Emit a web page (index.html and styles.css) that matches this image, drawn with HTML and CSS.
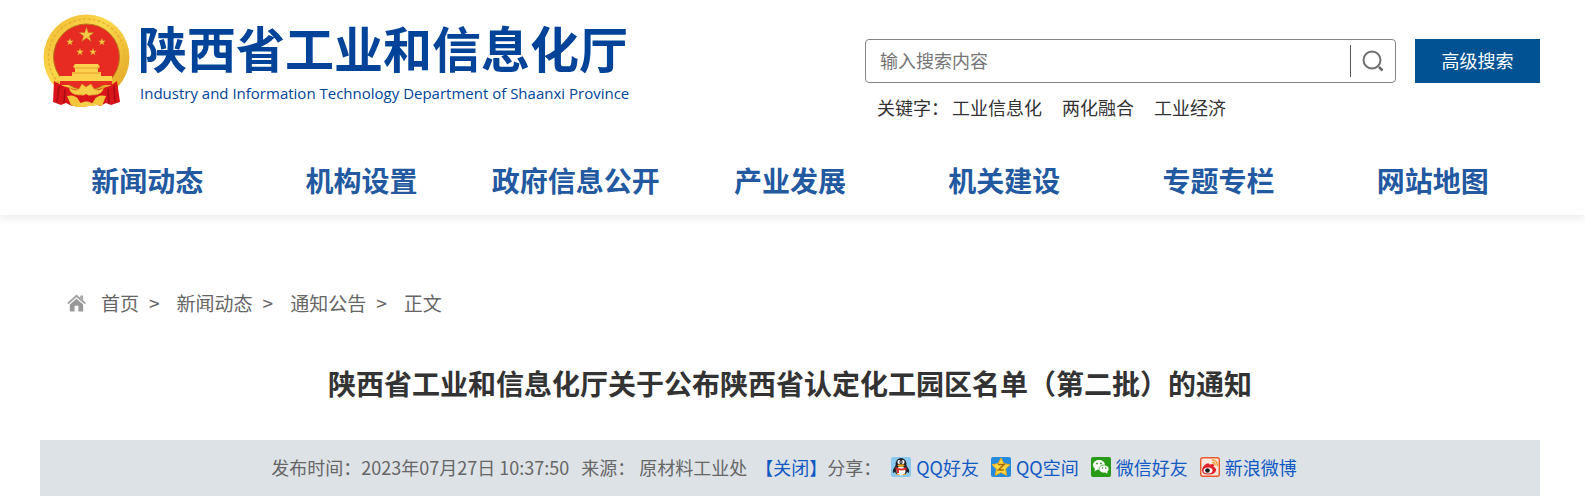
FILE: index.html
```html
<!DOCTYPE html>
<html lang="zh-CN">
<head>
  <meta charset="UTF-8">
  <meta name="viewport" content="width=device-width, initial-scale=1.0">
  <title>陕西省工业和信息化厅</title>
  <link rel="stylesheet" href="styles.css">
</head>
<body>
  <header class="header">
    <div class="wrap top">
      <a class="logo" href="#">
        <svg class="emblem" viewBox="0 0 87 93" aria-hidden="true">
          <defs>
            <linearGradient id="gold" x1="0" y1="0" x2="1" y2="1">
              <stop offset="0" stop-color="#efb52e"/>
              <stop offset=".4" stop-color="#fbd84c"/>
              <stop offset="1" stop-color="#dfa020"/>
            </linearGradient>
            <path id="star" d="M0-10 2.3-3.1H9.5L3.7 1.2 5.9 8.1 0 3.8-5.9 8.1-3.7 1.2-9.5-3.1H-2.3Z"/>
          </defs>
          <circle cx="43.500" cy="43.500" r="43" fill="url(#gold)"/>
          <circle cx="43.500" cy="43" r="38" fill="none" stroke="#e9b233" stroke-width="1.500" stroke-dasharray="3 2"/>
          <circle cx="43.500" cy="43" r="33" fill="#e72a22" stroke="#b9771a" stroke-width="1"/>
          <g fill="#f3c844" stroke="#b5611c" stroke-width=".5">
            <use href="#star" transform="translate(43.500 21) scale(.8)"/>
            <use href="#star" transform="translate(27 28) scale(.4)"/>
            <use href="#star" transform="translate(59 28) scale(.4)"/>
            <use href="#star" transform="translate(37 38) scale(.4)"/>
            <use href="#star" transform="translate(50 38) scale(.4)"/>
          </g>
          <path d="M32 50h23l2 3-2 1v4h3v4h11v5H17v-5h12v-4h3v-4l-2-1Z" fill="#fad24d"/>
          <path d="M31 54h25M29 59h29" stroke="#e2a02c" stroke-width="1"/>
          <path d="M17 67h52v4H17Z" fill="#e72a22"/>
          <path d="M11 67 20 72 34 76 43 72 53 76 67 72 74 67 77 88 68 91 63 89 57 92 43 86 29 92 23 89 18 91 10 88Z" fill="#d9151b"/>
          <path d="M16 72 14 88M22 75 21 89M65 75 66 90M71 72 72 88" stroke="#a80d14" stroke-width="1.500"/>
          <path d="M26 73q5 5 10 2l3-5 4 3 5-3 3 5q6 3 10-2-2 8-10 8-4-1-7 3-4-4-8-3-9 0-10-8Z" fill="#f7cc46" stroke="#d69121" stroke-width=".6"/>
          <path d="M24 82q8-2 12 4l7-3 8 3q4-6 12-4l-4 10-10-2-6 3H33l-5-2Z" fill="#f4c43b"/>
          <path d="M35 85 43 80 52 85 48 91H39Z" fill="#d9151b"/>
          <path d="M34 92q9-9 19 0Z" fill="#f8cf48"/>
        </svg>
        <span class="logo-text">
          <span class="logo-cn">陕西省工业和信息化厅</span>
          <span class="logo-en">Industry and Information Technology Department of Shaanxi Province</span>
        </span>
      </a>

      <div class="search">
        <form class="search-form">
          <div class="search-box">
            <input class="search-input" type="text" placeholder="输入搜索内容" aria-label="输入搜索内容">
            <button class="search-btn" type="button" aria-label="搜索">
              <svg viewBox="0 0 22 22" width="22" height="22">
                <circle cx="10" cy="10" r="8.500" fill="none" stroke="#707070" stroke-width="2"/>
                <path d="m17 17 3.500 3.500" stroke="#666" stroke-width="2.500"/>
              </svg>
            </button>
          </div>
          <button class="advanced" type="button">高级搜索</button>
        </form>
        <div class="keywords">
          <span>关键字：</span>
          <a href="#">工业信息化</a>
          <a href="#">两化融合</a>
          <a href="#">工业经济</a>
        </div>
      </div>
    </div>

    <nav class="wrap nav">
      <a href="#">新闻动态</a>
      <a href="#">机构设置</a>
      <a href="#">政府信息公开</a>
      <a href="#">产业发展</a>
      <a href="#">机关建设</a>
      <a href="#">专题专栏</a>
      <a href="#">网站地图</a>
    </nav>
  </header>

  <main class="wrap">
    <div class="crumbs">
      <svg class="home" viewBox="0 0 20 18" aria-hidden="true">
        <path d="M10 0 14 3.500V1h3v5.200L20 9l-1.500 1.300L10 3 1.500 10.300 0 9Z" fill="#a6a6a6"/>
        <path d="M10 4.500 17 10.500V18h-5v-6H8v6H3v-7.500Z" fill="#999"/>
      </svg>
      <a href="#">首页</a>
      <span class="sep">&gt;</span>
      <a href="#">新闻动态</a>
      <span class="sep">&gt;</span>
      <a href="#">通知公告</a>
      <span class="sep">&gt;</span>
      <span>正文</span>
    </div>

    <h1 class="title">陕西省工业和信息化厅关于公布陕西省认定化工园区名单（第二批）的通知</h1>

    <div class="info">
      <span class="time">发布时间：2023年07月27日 10:37:50</span>
      <span class="from">来源：</span>
      <span class="source">原材料工业处</span>
      <a class="close" href="#">【关闭】</a>
      <span class="share-label">分享：</span>
      <a class="share" href="#">
        <svg viewBox="0 0 20 20" aria-hidden="true">
          <rect width="20" height="20" rx="2" fill="#8cc9ee"/>
          <path d="M5 8q-4 5-3 8l2-1q1 3 6 3t6-3l2 1q1-3-3-8Z" fill="#20242a"/>
          <ellipse cx="10" cy="7" rx="5.500" ry="6" fill="#20242a"/>
          <ellipse cx="10" cy="14" rx="4.500" ry="4.500" fill="#fff"/>
          <ellipse cx="8" cy="5" rx="1.500" ry="2" fill="#fff"/>
          <ellipse cx="12" cy="5" rx="1.500" ry="2" fill="#fff"/>
          <path d="M8.500 4.500v1M11.500 4.500v1" stroke="#111"/>
          <ellipse cx="10" cy="8.500" rx="3.500" ry="1.200" fill="#f3a51d"/>
          <path d="M4.500 10q5.500 3 11 0v2.500Q10 14 8 13v3H6v-3.500l-1.500-.5Z" fill="#df2b28"/>
          <path d="M4 18q3-2 5.500 0ZM10.500 18q3-2 5.500 0Z" fill="#f3a51d"/>
        </svg>QQ好友</a>
      <a class="share" href="#">
        <svg viewBox="0 0 20 20" aria-hidden="true">
          <rect width="20" height="20" rx="2" fill="#278bdd"/>
          <path d="m10 1 2.800 5.700 6.200.9-4.500 4.400 1.100 6.300L10 15.400l-5.600 2.900L5.500 12 1 7.600l6.200-.9Z" fill="#ffdc43" stroke="#f2aa1d"/>
          <path d="M7 7.500h6l-5.500 5.500H13" fill="none" stroke="#a66b08" stroke-width="1.500"/>
        </svg>QQ空间</a>
      <a class="share" href="#">
        <svg viewBox="0 0 20 20" aria-hidden="true">
          <rect width="20" height="20" rx="2" fill="#289b16"/>
          <ellipse cx="8" cy="8" rx="6" ry="5" fill="#fff"/>
          <path d="m4 11-.5 3.500L7 12Z" fill="#fff"/>
          <ellipse cx="13" cy="12" rx="5" ry="4" fill="#fff" stroke="#289b16" stroke-width=".7"/>
          <path d="m14 15 2.500 2-.3-3Z" fill="#fff"/>
          <g fill="#289b16"><circle cx="6" cy="6.500" r=".9"/><circle cx="10" cy="6.500" r=".9"/><circle cx="11.500" cy="11" r=".8"/><circle cx="14.700" cy="11" r=".8"/></g>
        </svg>微信好友</a>
      <a class="share" href="#">
        <svg viewBox="0 0 20 20" aria-hidden="true">
          <rect x=".7" y=".7" width="18.600" height="18.600" rx="2" fill="#f8e6df" stroke="#e85a2a" stroke-width="1.400"/>
          <path d="M2 13q0-3 4-6 3-2 3.500.7 4-1.400 4.500.6 0 1-.5 1.700 3 1 2.500 3.500-1 4-7.500 4Q2 17.500 2 13Z" fill="#df2029"/>
          <ellipse cx="8" cy="13.500" rx="4.500" ry="3" fill="#fff"/>
          <circle cx="7.500" cy="13.500" r="2.300" fill="#181818"/>
          <path d="M12 3q5-.5 5.500 6M12.500 5.500q2.500 0 2.700 3" fill="none" stroke="#f29a2c" stroke-width="1.400"/>
        </svg>新浪微博</a>
    </div>
  </main>
</body>
</html>
```
FILE: styles.css
```css
body {
  margin: 0;
  background: #fff;
  color: #333;
  font-family: "Noto Sans CJK SC", sans-serif;
  font-size: 18px;
  font-weight: 400;
  line-height: 24px;
}

a {
  color: inherit;
  text-decoration: none;
}

.wrap {
  padding: 0 45px 0 40px;
}

.header {
  padding-bottom: 2px;
  box-shadow: 0 2px 10px rgba(0, 0, 0, 0.1);
}

.top {
  display: flex;
  justify-content: space-between;
  padding-bottom: 28px;
}

.logo {
  display: flex;
  align-items: flex-start;
  gap: 8px;
  padding: 14px 0 0 3px;
  color: #004398;
}

.emblem {
  width: 87px;
  height: 93px;
}

.logo-text {
  display: flex;
  flex-direction: column;
  gap: 9px;
  padding-top: 8px;
}

.logo-cn {
  font-size: 49px;
  font-weight: bold;
  line-height: 50px;
}

.logo-en {
  padding-left: 2px;
  font-family: "Open Sans", sans-serif;
  font-size: 15px;
}

.search {
  width: 675px;
  padding-top: 39px;
}

.search-form {
  display: flex;
  gap: 19px;
}

.search-box {
  display: flex;
  flex: 1;
  align-items: center;
  box-sizing: border-box;
  height: 44px;
  border: 1px solid #858585;
  border-radius: 4px;
}

.search-input {
  flex: 1;
  min-width: 0;
  padding: 0 14px 2px;
  border: none;
  outline: none;
  background: none;
  font: inherit;
}

.search-input::placeholder {
  color: #757575;
}

.search-btn {
  display: flex;
  align-items: center;
  height: 32px;
  padding: 0 11px;
  border: none;
  border-left: 1px solid #555;
  background: none;
  cursor: pointer;
}

.advanced {
  width: 125px;
  padding: 0 0 2px;
  border: none;
  background: #005293;
  color: #fff;
  font: inherit;
  cursor: pointer;
}

.keywords {
  display: flex;
  gap: 20px;
  padding: 12px 0 0 12px;
}

.keywords span {
  margin-right: -17px;
}

.nav {
  display: grid;
  grid-template-columns: repeat(7, 1fr);
  color: #2259a0;
  font-size: 28px;
  font-weight: bold;
  line-height: 66px;
  text-align: center;
  white-space: nowrap;
}

.crumbs {
  display: flex;
  align-items: center;
  padding: 76px 0 0 27px;
  color: #666;
  font-size: 19px;
}

.home {
  width: 19px;
  height: 18px;
  margin-right: 15px;
}

.sep {
  margin: 0 17px 0 10px;
}

.title {
  margin: 48px 0 37px;
  font-size: 28px;
  font-weight: bold;
  line-height: 40px;
  text-align: center;
}

.info {
  display: flex;
  justify-content: center;
  align-items: center;
  padding: 15px 0 17px;
  background: #dde2e6;
  color: #666;
  white-space: nowrap;
}

.time {
  margin-right: 12px;
}

.from {
  margin-right: 4px;
}

.source {
  margin-right: 8px;
}

.close,
.share {
  color: #1259c3;
}

.share-label {
  margin-right: 10px;
}

.share {
  display: flex;
  align-items: center;
  gap: 5px;
  margin-right: 12px;
}

.share svg {
  width: 20px;
  height: 20px;
}
```
